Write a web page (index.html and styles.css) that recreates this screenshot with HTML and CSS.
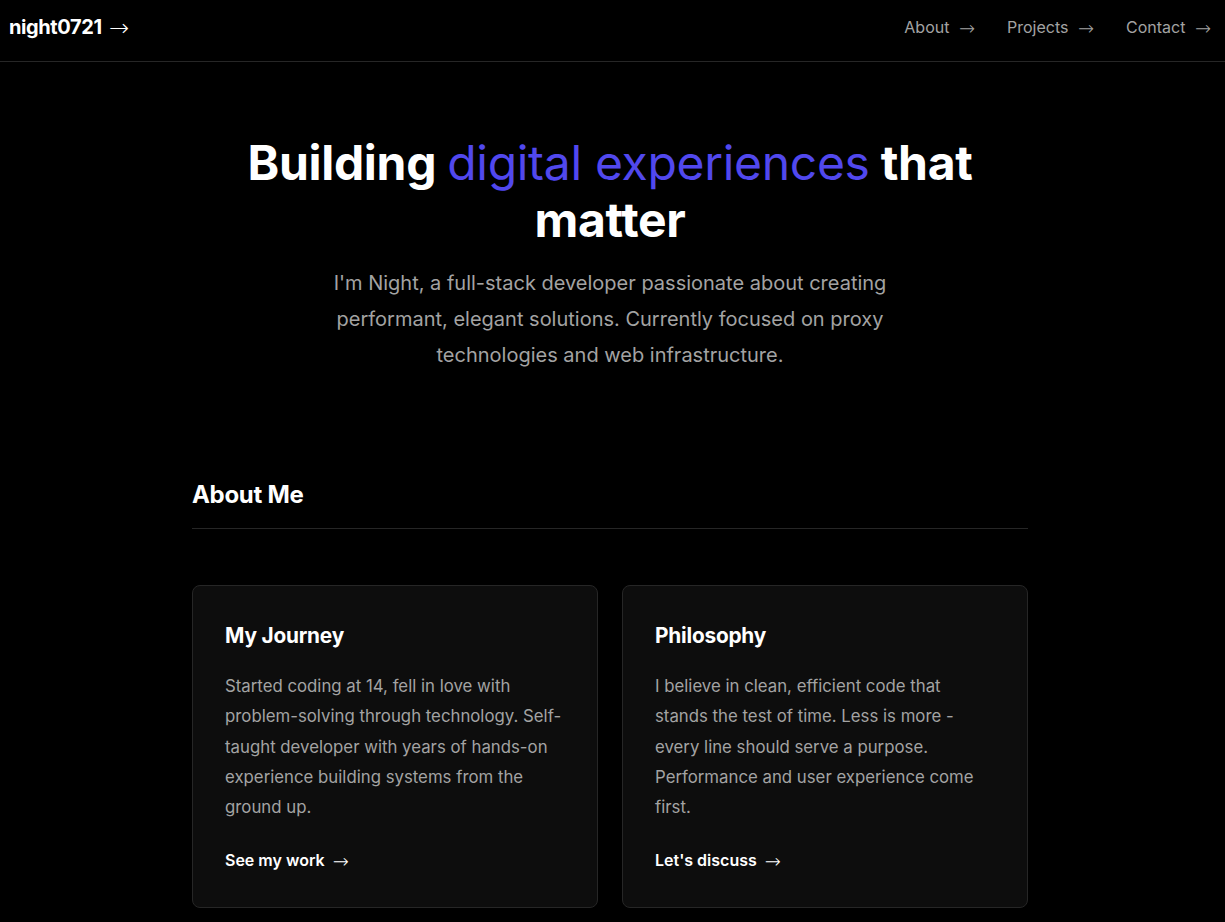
FILE: index.html
```html
<!DOCTYPE html>
<html lang="en">
<head>
<meta charset="utf-8">
<title>night0721</title>
<link rel="stylesheet" href="styles.css">
</head>
<body>
<header class="site-header">
  <a class="logo" href="#">night0721 <span class="arrow">→</span></a>
  <nav class="nav">
    <a href="#">About <span class="arrow">→</span></a>
    <a href="#">Projects <span class="arrow">→</span></a>
    <a href="#">Contact <span class="arrow">→</span></a>
  </nav>
</header>
<main>
  <section class="hero">
    <h1>Building <span class="accent">digital experiences</span> that matter</h1>
    <p>I'm Night, a full-stack developer passionate about creating performant, elegant solutions. Currently focused on proxy technologies and web infrastructure.</p>
  </section>
  <section class="about">
    <h2>About Me</h2>
    <div class="cards">
      <article class="card">
        <h3>My Journey</h3>
        <p>Started coding at 14, fell in love with problem-solving through technology. Self-taught developer with years of hands-on experience building systems from the ground up.</p>
        <a class="card-link" href="#">See my work <span class="arrow">→</span></a>
      </article>
      <article class="card">
        <h3>Philosophy</h3>
        <p>I believe in clean, efficient code that stands the test of time. Less is more - every line should serve a purpose. Performance and user experience come first.</p>
        <a class="card-link" href="#">Let's discuss <span class="arrow">→</span></a>
      </article>
    </div>
  </section>
</main>
</body>
</html>
```
FILE: styles.css
```css
* { box-sizing: border-box; }
html, body { margin: 0; padding: 0; }
body {
  background: #000;
  color: #fff;
  font-family: Inter, "Noto Sans", "Liberation Sans", sans-serif;
  overflow: hidden;
}
a { color: inherit; text-decoration: none; }
.arrow {
  font-family: "DejaVu Sans", sans-serif;
  font-weight: 200;
  font-size: 1.2em;
  line-height: 0;
  vertical-align: -2px;
  margin-left: 3px;
}

.site-header {
  height: 62px;
  border-bottom: 1px solid #262626;
  display: flex;
  align-items: center;
  justify-content: space-between;
  padding: 0 14px 7px 9px;
}
.logo {
  font-size: 20px;
  font-weight: 700;
  letter-spacing: -0.4px;
  color: #fff;
}
.nav {
  display: flex;
  gap: 32px;
}
.nav a {
  font-size: 16px;
  color: #a3a3a3;
}
.nav .arrow { margin-left: 5px; }

main { padding-right: 5px; }

.hero {
  text-align: center;
  max-width: 780px;
  margin: 72px auto 0;
}
.hero h1 {
  margin: 0;
  font-size: 48px;
  line-height: 57px;
  font-weight: 700;
  letter-spacing: -0.3px;
}
.accent { color: #5148ee; font-weight: 400; }
.hero p {
  margin: 17px auto 0;
  max-width: 580px;
  font-size: 20px;
  line-height: 36px;
  color: #a3a3a3;
}

.about {
  width: 836px;
  margin: 106px auto 0;
}
.about h2 {
  margin: 0;
  font-size: 24px;
  line-height: 32px;
  font-weight: 700;
  letter-spacing: -0.3px;
  padding-bottom: 17px;
  border-bottom: 1px solid #262626;
}
.cards {
  display: grid;
  grid-template-columns: 1fr 1fr;
  gap: 24px;
  margin-top: 56px;
}
.card {
  background: #0d0d0d;
  border: 1px solid #262626;
  border-radius: 8px;
  padding: 36px 32px 35px;
  display: flex;
  flex-direction: column;
}
.card h3 {
  margin: 0;
  font-size: 20.8px;
  line-height: 28px;
  font-weight: 700;
  letter-spacing: -0.2px;
}
.card p {
  margin: 21px 0 0;
  font-size: 16.8px;
  line-height: 30.25px;
  color: #a3a3a3;
}
.card-link {
  margin-top: 26px;
  font-size: 16px;
  font-weight: 600;
  line-height: 24px;
  color: #fff;
}
.card-link .arrow { margin-left: 4px; }
```
